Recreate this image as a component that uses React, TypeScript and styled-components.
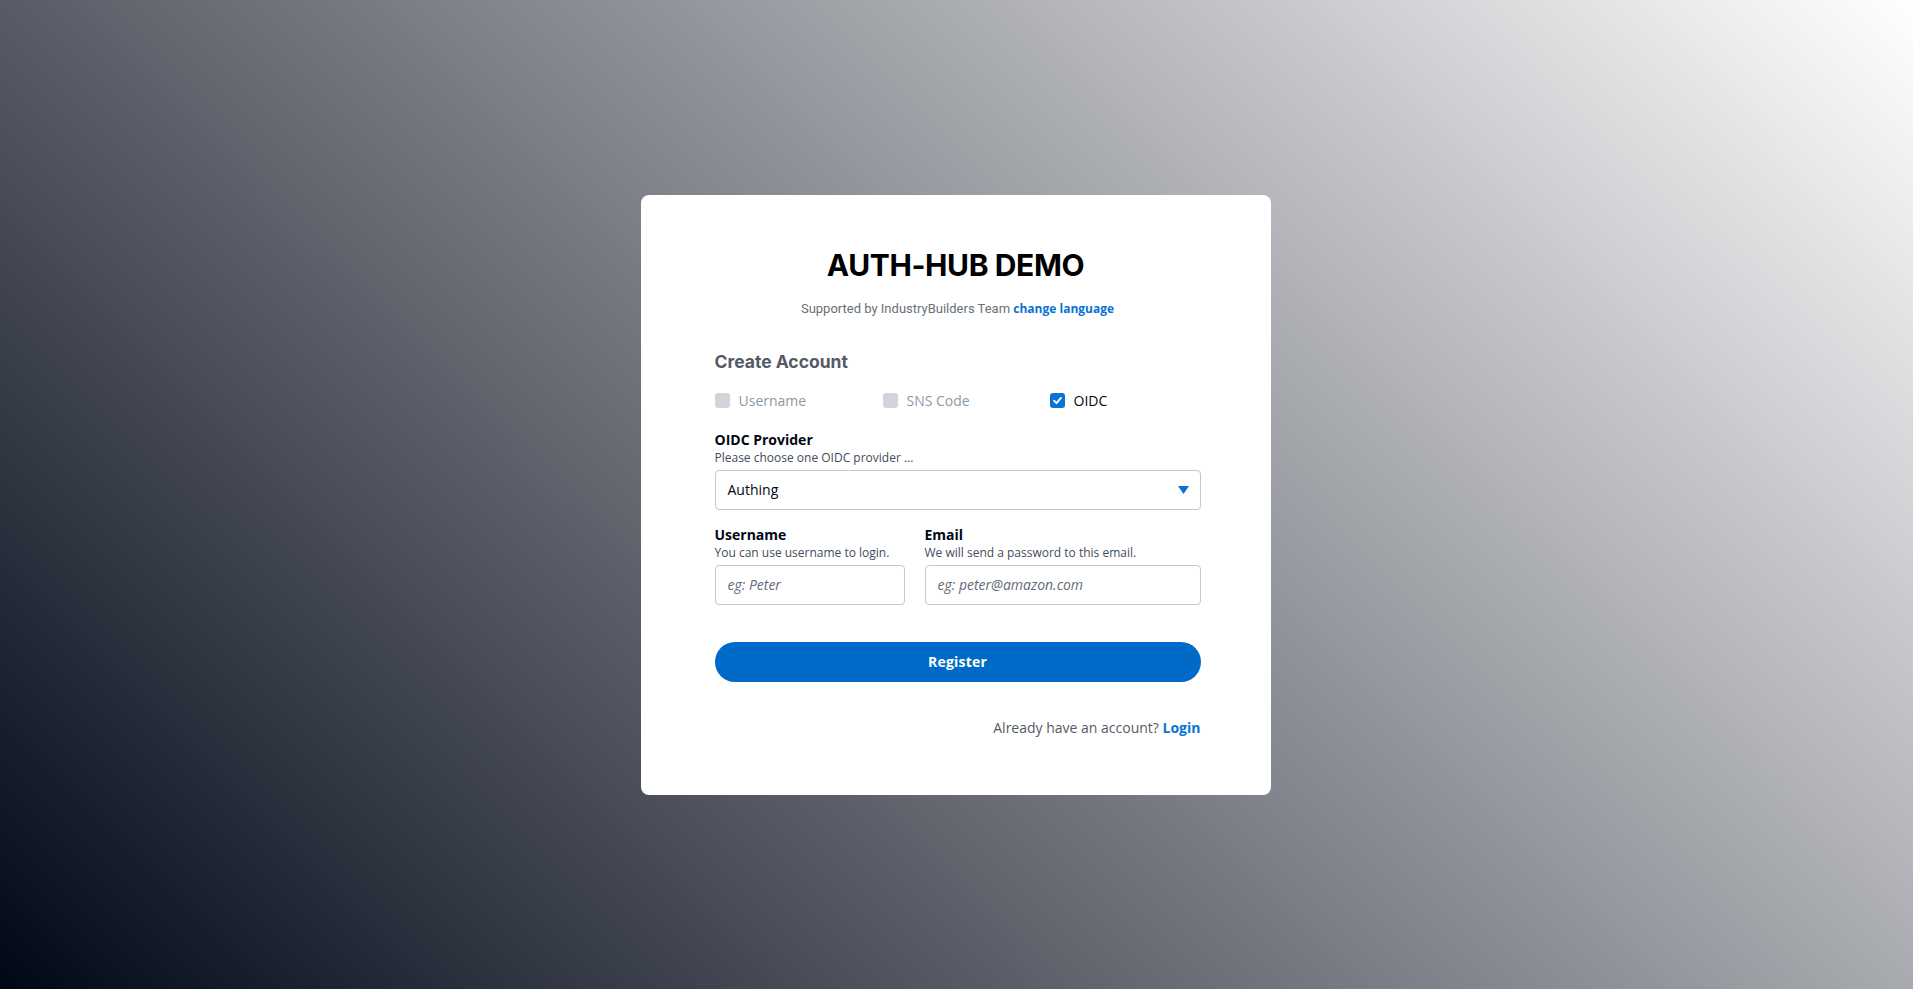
import React, { useState } from 'react'
import styled, { createGlobalStyle } from 'styled-components'

const GlobalStyle = createGlobalStyle`
  html, body {
    margin: 0;
    padding: 0;
    height: 100%;
  }
  body {
    font-family: "Open Sans", "Liberation Sans", sans-serif;
    color: #000716;
  }
  #root {
    height: 100%;
  }
`

const Page = styled.div`
  min-height: 100vh;
  display: flex;
  align-items: center;
  justify-content: center;
  padding-right: 2px;
  box-sizing: border-box;
  background: linear-gradient(45deg, #000716 0%, #ffffff 100%);
`

const Card = styled.div`
  width: 630px;
  height: 600px;
  box-sizing: border-box;
  background: #ffffff;
  border-radius: 8px;
  padding: 50px 70px 0 74px;
`

const Title = styled.h1`
  margin: 0 4px 0 0;
  text-align: center;
  font-family: Inter, "Liberation Sans", sans-serif;
  font-weight: 700;
  font-size: 30px;
  line-height: 40px;
  letter-spacing: -0.4px;
  color: #000000;
`

const Subtitle = styled.div`
  margin-top: 15px;
  text-align: center;
  font-family: Roboto, "Liberation Sans", sans-serif;
  font-size: 13px;
  line-height: 18px;
  color: #687078;
`

const Link = styled.a<{ $size?: number }>`
  font-family: "Open Sans", sans-serif;
  font-weight: 700;
  font-size: ${p => p.$size ?? 12}px;
  color: #0972d3;
  text-decoration: none;
  cursor: pointer;
`

const Heading = styled.h2`
  margin: 32px 0 0;
  font-family: Inter, Roboto, sans-serif;
  font-weight: 700;
  font-size: 17.5px;
  line-height: 24px;
  color: #545b64;
`

const TypeRow = styled.div`
  display: grid;
  grid-template-columns: 168px 167px 1fr;
  margin-top: 17px;
`

const TypeOption = styled.label<{ $active: boolean }>`
  display: flex;
  align-items: center;
  gap: 9px;
  font-size: 14px;
  line-height: 20px;
  color: ${p => (p.$active ? '#000716' : '#8d99a8')};
  cursor: pointer;
`

const Box = styled.span<{ $checked: boolean }>`
  width: 15px;
  height: 15px;
  border-radius: 3px;
  background: ${p => (p.$checked ? '#0972d3' : '#d1d5db')};
  display: flex;
  align-items: center;
  justify-content: center;
`

const Field = styled.div<{ $mt?: number }>`
  display: flex;
  flex-direction: column;
  margin-top: ${p => p.$mt ?? 0}px;
  min-width: 0;
`

const Label = styled.div`
  font-size: 14px;
  font-weight: 700;
  line-height: 20px;
  color: #000716;
`

const Hint = styled.div`
  font-size: 12px;
  line-height: 16px;
  color: #414d5c;
  margin-bottom: 4px;
`

const SelectBox = styled.div`
  height: 40px;
  box-sizing: border-box;
  border: 1px solid #c6c6cd;
  border-radius: 4px;
  display: flex;
  align-items: center;
  justify-content: space-between;
  padding: 0 11px 0 12px;
  font-size: 14px;
  color: #000716;
`

const Columns = styled.div`
  display: grid;
  grid-template-columns: 190px 1fr;
  column-gap: 20px;
  margin-top: 15px;
`

const Input = styled.input`
  height: 40px;
  box-sizing: border-box;
  width: 100%;
  border: 1px solid #c6c6cd;
  border-radius: 4px;
  padding: 0 12px;
  font-family: "Open Sans", sans-serif;
  font-size: 14px;
  outline: none;
  &::placeholder {
    color: #5f6b7a;
    font-style: italic;
  }
`

const PrimaryButton = styled.button`
  margin-top: 37px;
  width: 100%;
  height: 40px;
  border: none;
  border-radius: 20px;
  background: #006ac8;
  color: #ffffff;
  font-family: "Open Sans", sans-serif;
  font-weight: 700;
  font-size: 14px;
  letter-spacing: 0.2px;
  cursor: pointer;
`

const Footer = styled.div`
  margin-top: 36px;
  text-align: right;
  font-size: 14px;
  line-height: 20px;
  color: #545b64;
`

const types = ['Username', 'SNS Code', 'OIDC']

export default function App() {
  const [type, setType] = useState('OIDC')

  return (
    <>
      <GlobalStyle />
      <Page>
        <Card>
          <Title>AUTH-HUB DEMO</Title>
          <Subtitle>
            Supported by IndustryBuilders Team <Link>change language</Link>
          </Subtitle>
          <Heading>Create Account</Heading>
          <TypeRow>
            {types.map(t => (
              <TypeOption key={t} $active={t === type} onClick={() => setType(t)}>
                <Box $checked={t === type}>
                  {t === type && (
                    <svg width="11" height="11" viewBox="0 0 12 12">
                      <path d="M2.2 6.2 L4.9 8.9 L9.8 3.2" fill="none" stroke="#fff" strokeWidth="2" strokeLinecap="round" strokeLinejoin="round" />
                    </svg>
                  )}
                </Box>
                {t}
              </TypeOption>
            ))}
          </TypeRow>
          <Field $mt={19}>
            <Label>OIDC Provider</Label>
            <Hint>Please choose one OIDC provider ...</Hint>
            <SelectBox>
              <span>Authing</span>
              <svg width="11" height="8" viewBox="0 0 11 8">
                <path d="M0 0 H11 L5.5 8 Z" fill="#0972d3" />
              </svg>
            </SelectBox>
          </Field>
          <Columns>
            <Field>
              <Label>Username</Label>
              <Hint>You can use username to login.</Hint>
              <Input placeholder="eg: Peter" />
            </Field>
            <Field>
              <Label>Email</Label>
              <Hint>We will send a password to this email.</Hint>
              <Input placeholder="eg: peter@amazon.com" />
            </Field>
          </Columns>
          <PrimaryButton>Register</PrimaryButton>
          <Footer>
            Already have an account? <Link $size={14}>Login</Link>
          </Footer>
        </Card>
      </Page>
    </>
  )
}
